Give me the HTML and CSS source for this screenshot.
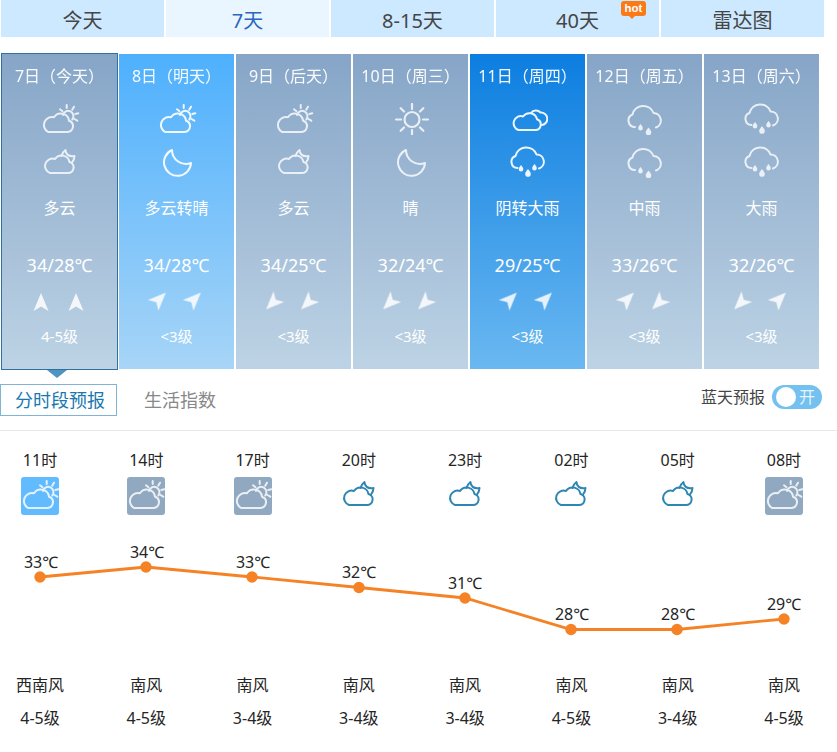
FILE: index.html
```html
<!DOCTYPE html>
<html lang="zh">
<head>
<meta charset="utf-8">
<title>7天天气预报</title>
<link rel="stylesheet" href="styles.css">
</head>
<body>
<svg class="defs" aria-hidden="true">
  <symbol id="sun-cloud" viewBox="0 0 40 32">
    <g fill="none" stroke="currentColor" stroke-width="2" stroke-linecap="round" stroke-linejoin="round">
      <path d="M8 29H27.500A5.800 5.800 0 0 0 29 17.700A8.200 8.200 0 0 0 14 14.300A8 8 0 0 0 8 29Z"/>
      <path d="M23 12A5.300 5.300 0 1 1 32.300 16.500"/>
      <path d="M26.700 2V5M34 3.700L32.200 6.700M38.300 10.300L35.300 11M37.300 17.700L34.500 16M20 6.300L22.500 8.200"/>
    </g>
  </symbol>
  <symbol id="moon-cloud" viewBox="0 0 40 32">
    <g fill="none" stroke="currentColor" stroke-width="2" stroke-linecap="round" stroke-linejoin="round">
      <path d="M10 27H28A5.600 5.600 0 0 0 29.500 16A8 8 0 0 0 15 13A7 7 0 0 0 10 27Z"/>
      <path d="M21.500 10C22 7.500 23.500 5.500 25.500 4C25.500 8 28.500 11 34.500 10C34.500 12.500 33.500 14.500 32 16.500"/>
    </g>
  </symbol>
  <symbol id="moon" viewBox="0 0 40 32">
    <path d="M15 4A13.500 13.500 0 1 0 34 17A14 14 0 0 1 15 4Z" fill="none" stroke="currentColor" stroke-width="2" stroke-linejoin="round"/>
  </symbol>
  <symbol id="sun" viewBox="0 0 40 32">
    <g fill="none" stroke="currentColor" stroke-width="2.200" stroke-linecap="round">
      <circle cx="21" cy="16.500" r="7.500"/>
      <path d="M21 1V6M21 27V32M5 16.500H10M32 16.500H37M9.700 5.200L13 8.500M29 24.500L32.300 27.800M9.700 27.800L13 24.500M29 8.500L32.300 5.200"/>
    </g>
  </symbol>
  <symbol id="overcast" viewBox="0 0 40 32">
    <g fill="none" stroke="currentColor" stroke-width="2" stroke-linecap="round" stroke-linejoin="round">
      <path d="M10.500 27H27.500A5.500 5.500 0 0 0 29 16.300A7.800 7.800 0 0 0 15 13.500A6.900 6.900 0 0 0 10.500 27Z"/>
      <path d="M23 10A6 6 0 0 1 32.500 9.500A6.300 6.300 0 0 1 34 22"/>
    </g>
  </symbol>
  <symbol id="rain-mid" viewBox="0 0 40 32">
    <g fill="none" stroke="currentColor" stroke-width="2" stroke-linecap="round" stroke-linejoin="round">
      <path d="M10 24A6.500 6.500 0 0 1 7.500 11.500A11 11 0 0 1 28.500 10A7.500 7.500 0 0 1 31 24.500"/>
    </g>
    <path d="M15.500 21c1.400 1.900 2.300 3 2.300 4.200a2.300 2.300 0 0 1-4.600 0c0-1.200.9-2.300 2.300-4.200zM23.500 24.500c1.700 2.200 2.800 3.500 2.800 4.900a2.800 2.800 0 0 1-5.600 0c0-1.400 1.100-2.700 2.800-4.900z" fill="currentColor"/>
  </symbol>
  <symbol id="rain-big" viewBox="0 0 40 32">
    <g fill="none" stroke="currentColor" stroke-width="2" stroke-linecap="round" stroke-linejoin="round">
      <path d="M9.500 22A6.200 6.200 0 0 1 7.500 10A11 11 0 0 1 28.500 8.500A7.200 7.200 0 0 1 31 22.500"/>
    </g>
    <path d="M13 19c1.400 1.900 2.300 3 2.300 4.200a2.300 2.300 0 0 1-4.600 0c0-1.200.9-2.300 2.300-4.200zM26.500 18c1.400 1.900 2.300 3 2.300 4.200a2.300 2.300 0 0 1-4.600 0c0-1.200.9-2.300 2.300-4.200zM20 23c1.700 2.200 2.800 3.500 2.800 4.900a2.800 2.800 0 0 1-5.600 0c0-1.400 1.100-2.700 2.800-4.900z" fill="currentColor"/>
  </symbol>
  <symbol id="wind" viewBox="0 0 16 18">
    <path d="M8 0L15.500 18L8 13.500L.500 18Z" fill="currentColor"/>
  </symbol>
</svg>

<nav class="tabs">
  <a class="tab">今天</a>
  <a class="tab tab-active">7天</a>
  <a class="tab">8-15天</a>
  <a class="tab">40天<span class="hot">hot</span></a>
  <a class="tab">雷达图</a>
</nav>

<section class="days">
  <article class="day day-grey day-selected">
    <h3 class="date">7日（今天）</h3>
    <svg class="wx wx-first"><use href="#sun-cloud"/></svg>
    <svg class="wx"><use href="#moon-cloud"/></svg>
    <p class="desc">多云</p>
    <p class="temp">34/28℃</p>
    <div class="winds"><svg class="arrow"><use href="#wind"/></svg><svg class="arrow"><use href="#wind"/></svg></div>
    <p class="level">4-5级</p>
  </article>
  <article class="day day-sky">
    <h3 class="date">8日（明天）</h3>
    <svg class="wx wx-first"><use href="#sun-cloud"/></svg>
    <svg class="wx"><use href="#moon"/></svg>
    <p class="desc">多云转晴</p>
    <p class="temp">34/28℃</p>
    <div class="winds"><svg class="arrow ne"><use href="#wind"/></svg><svg class="arrow ne"><use href="#wind"/></svg></div>
    <p class="level">&lt;3级</p>
  </article>
  <article class="day day-grey">
    <h3 class="date">9日（后天）</h3>
    <svg class="wx wx-first"><use href="#sun-cloud"/></svg>
    <svg class="wx"><use href="#moon-cloud"/></svg>
    <p class="desc">多云</p>
    <p class="temp">34/25℃</p>
    <div class="winds"><svg class="arrow sw"><use href="#wind"/></svg><svg class="arrow sw"><use href="#wind"/></svg></div>
    <p class="level">&lt;3级</p>
  </article>
  <article class="day day-grey">
    <h3 class="date">10日（周三）</h3>
    <svg class="wx wx-first"><use href="#sun"/></svg>
    <svg class="wx"><use href="#moon"/></svg>
    <p class="desc">晴</p>
    <p class="temp">32/24℃</p>
    <div class="winds"><svg class="arrow sw"><use href="#wind"/></svg><svg class="arrow sw"><use href="#wind"/></svg></div>
    <p class="level">&lt;3级</p>
  </article>
  <article class="day day-blue">
    <h3 class="date">11日（周四）</h3>
    <svg class="wx wx-first"><use href="#overcast"/></svg>
    <svg class="wx"><use href="#rain-big"/></svg>
    <p class="desc">阴转大雨</p>
    <p class="temp">29/25℃</p>
    <div class="winds"><svg class="arrow ne"><use href="#wind"/></svg><svg class="arrow ne"><use href="#wind"/></svg></div>
    <p class="level">&lt;3级</p>
  </article>
  <article class="day day-grey">
    <h3 class="date">12日（周五）</h3>
    <svg class="wx wx-first"><use href="#rain-mid"/></svg>
    <svg class="wx"><use href="#rain-mid"/></svg>
    <p class="desc">中雨</p>
    <p class="temp">33/26℃</p>
    <div class="winds"><svg class="arrow ne"><use href="#wind"/></svg><svg class="arrow sw"><use href="#wind"/></svg></div>
    <p class="level">&lt;3级</p>
  </article>
  <article class="day day-grey">
    <h3 class="date">13日（周六）</h3>
    <svg class="wx wx-first"><use href="#rain-big"/></svg>
    <svg class="wx"><use href="#rain-big"/></svg>
    <p class="desc">大雨</p>
    <p class="temp">32/26℃</p>
    <div class="winds"><svg class="arrow sw"><use href="#wind"/></svg><svg class="arrow ne"><use href="#wind"/></svg></div>
    <p class="level">&lt;3级</p>
  </article>
</section>

<section class="subbar">
  <a class="sub sub-active">分时段预报</a>
  <a class="sub">生活指数</a>
  <div class="bluesky">
    <span class="bluesky-label">蓝天预报</span>
    <span class="toggle"><span class="knob"></span><span class="toggle-text">开</span></span>
  </div>
</section>

<section class="hours">
  <div class="row">
    <span class="cell hour">11时</span><span class="cell hour">14时</span><span class="cell hour">17时</span><span class="cell hour">20时</span>
    <span class="cell hour">23时</span><span class="cell hour">02时</span><span class="cell hour">05时</span><span class="cell hour">08时</span>
  </div>
  <div class="row row-icons">
    <span class="cell"><span class="hicon hicon-sky"><svg><use href="#sun-cloud"/></svg></span></span>
    <span class="cell"><span class="hicon hicon-grey"><svg><use href="#sun-cloud"/></svg></span></span>
    <span class="cell"><span class="hicon hicon-grey"><svg><use href="#sun-cloud"/></svg></span></span>
    <span class="cell"><span class="hicon hicon-night"><svg><use href="#moon-cloud"/></svg></span></span>
    <span class="cell"><span class="hicon hicon-night"><svg><use href="#moon-cloud"/></svg></span></span>
    <span class="cell"><span class="hicon hicon-night"><svg><use href="#moon-cloud"/></svg></span></span>
    <span class="cell"><span class="hicon hicon-night"><svg><use href="#moon-cloud"/></svg></span></span>
    <span class="cell"><span class="hicon hicon-grey"><svg><use href="#sun-cloud"/></svg></span></span>
  </div>
  <svg class="chart" viewBox="0 515 837 155">
    <polyline class="chart-line" points="40,577 146,567 252,577 359,587.500 465,598 571,629.500 677,629.500 784,619"/>
    <g class="chart-dots">
      <circle cx="40" cy="577" r="5.700"/><circle cx="146" cy="567" r="5.700"/><circle cx="252" cy="577" r="5.700"/><circle cx="359" cy="587.500" r="5.700"/>
      <circle cx="465" cy="598" r="5.700"/><circle cx="571" cy="629.500" r="5.700"/><circle cx="677" cy="629.500" r="5.700"/><circle cx="784" cy="619" r="5.700"/>
    </g>
    <g class="chart-labels">
      <text x="41" y="568">33℃</text><text x="147" y="558">34℃</text><text x="253" y="568">33℃</text><text x="359" y="578">32℃</text>
      <text x="465" y="589">31℃</text><text x="572" y="620">28℃</text><text x="678" y="620">28℃</text><text x="784" y="610">29℃</text>
    </g>
  </svg>
  <div class="row row-wind">
    <span class="cell">西南风</span><span class="cell">南风</span><span class="cell">南风</span><span class="cell">南风</span>
    <span class="cell">南风</span><span class="cell">南风</span><span class="cell">南风</span><span class="cell">南风</span>
  </div>
  <div class="row row-level">
    <span class="cell">4-5级</span><span class="cell">4-5级</span><span class="cell">3-4级</span><span class="cell">3-4级</span>
    <span class="cell">3-4级</span><span class="cell">4-5级</span><span class="cell">3-4级</span><span class="cell">4-5级</span>
  </div>
</section>
</body>
</html>
```
FILE: styles.css
```css
* { box-sizing: border-box; }
html, body { margin: 0; padding: 0; }
body {
  width: 837px;
  background: #fff;
  font-family: "Noto Sans", "Noto Sans CJK SC", sans-serif;
  color: #252525;
  overflow-x: hidden;
}
.defs { position: absolute; width: 0; height: 0; }

/* top tabs */
.tabs { display: flex; gap: 2px; padding-left: 1px; height: 37px; }
.tab {
  position: relative;
  width: 163px;
  height: 37px;
  background: #cde9ff;
  color: #454545;
  font-size: 20px;
  line-height: 41px;
  text-align: center;
}
.tab-active { background: #e9f6ff; color: #2d66bd; }
.hot {
  position: absolute;
  top: 1px;
  right: 13px;
  width: 25px;
  height: 15px;
  border-radius: 3px;
  background: #fb7a16;
  color: #fff;
  font-family: "Liberation Sans", sans-serif;
  font-size: 11.500px;
  font-weight: 700;
  line-height: 14px;
}
.hot::after {
  content: "";
  position: absolute;
  left: 8px;
  top: 15px;
  border-style: solid;
  border-width: 3px 3px 0 3px;
  border-color: #fb7a16 transparent transparent transparent;
}

/* daily cards */
.days { display: flex; gap: 2px; padding: 17px 0 0 2px; }
.day {
  position: relative;
  width: 115px;
  height: 315px;
  padding-top: 10px;
  color: #fff;
  text-align: center;
}
.day p, .date { margin: 0; font-weight: 400; }
.day-grey { background: linear-gradient(#86a5c7, #bdd3e5); }
.day-sky { background: linear-gradient(#4eb0fd, #a7d5f7); }
.day-blue { background: linear-gradient(#0c7ee0, #6ab8f1); }
.day-selected { outline: 1px solid #2f709f; }
.day-selected::after {
  content: "";
  position: absolute;
  left: 45px;
  top: 316px;
  border-style: solid;
  border-width: 8px 10px 0 10px;
  border-color: #4f93c0 transparent transparent transparent;
}
.date { font-size: 16px; line-height: 24px; opacity: .95; }
.wx { display: block; width: 40px; height: 32px; margin: 11px auto 0; opacity: .8; }
.wx-first { margin-top: 15px; }
.day-sky .wx, .day-blue .wx { opacity: .92; }
.desc { font-size: 16px; line-height: 24px; margin-top: 18px !important; }
.temp { font-size: 18px; line-height: 24px; margin-top: 33px !important; }
.winds { display: flex; justify-content: center; gap: 19px; height: 20px; margin-top: 15px; padding-right: 3px; }
.arrow { width: 16px; height: 18px; margin-top: 1px; color: #fff; opacity: .85; filter: blur(.4px); }
.ne { transform: translate(1.500px, -3px) rotate(45deg); }
.sw { transform: translate(-2.500px, 1px) rotate(225deg); }
.level { font-size: 15px; line-height: 24px; margin-top: 12px !important; }

/* sub navigation */
.subbar {
  display: flex;
  align-items: flex-start;
  height: 47px;
  margin-top: 15px;
  border-bottom: 1px solid #e8e8e8;
}
.sub {
  height: 32px;
  padding: 0 14px;
  font-size: 18px;
  line-height: 32px;
  color: #888;
  white-space: nowrap;
}
.sub-active {
  width: 117px;
  padding-right: 0;
  border: 1px solid #7fb4d6;
  color: #1878b0;
  margin-right: 13px;
  line-height: 31px;
}
.bluesky { display: flex; align-items: center; gap: 7px; margin-left: auto; margin-right: 15px; margin-top: 1px; }
.bluesky-label { font-size: 16px; line-height: 24px; color: #454545; }
.toggle {
  position: relative;
  display: block;
  width: 50px;
  height: 24px;
  border-radius: 12px;
  background: #74c0ee;
  color: #e6f4fd;
  font-size: 16px;
  line-height: 24px;
  text-align: right;
  padding-right: 7px;
}
.knob {
  position: absolute;
  left: 4px;
  top: 2px;
  width: 20px;
  height: 20px;
  border-radius: 50%;
  background: #fff;
}

/* hourly */
.hours { padding-top: 17px; }
.row { display: flex; justify-content: space-between; padding: 0 18px 0 5px; }
.cell { display: block; width: 70px; font-size: 16px; line-height: 24px; text-align: center; }
.row-icons { margin-top: 5px; height: 38px; }
.row-icons .cell { display: flex; justify-content: center; }
.hicon { display: block; width: 38px; height: 38px; border-radius: 3px; padding: 2px 0 0; color: #fff; }
.hicon svg { display: block; width: 40px; height: 32px; margin-left: -1px; opacity: .82; overflow: visible; }
.hicon-sky { background: #63bbff; }
.hicon-grey { background: #90a8c0; }
.hicon-night { color: #2f86b2; padding-top: 1px; }
.hicon-night svg { opacity: 1; }
.chart { display: block; width: 837px; height: 155px; }
.chart-line { fill: none; stroke: #f58225; stroke-width: 2.800; }
.chart-dots { fill: #f58225; }
.chart-labels { fill: #252525; font-size: 16px; text-anchor: middle; }
.row-wind { margin-top: 3px; }
.row-level { margin-top: 9px; }
```
